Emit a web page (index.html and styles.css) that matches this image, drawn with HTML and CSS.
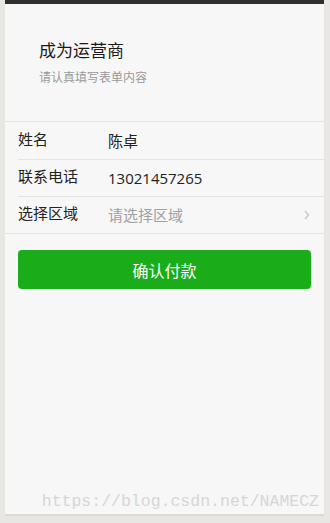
FILE: index.html
```html
<!DOCTYPE html>
<html lang="zh">
<head>
<meta charset="utf-8">
<link rel="stylesheet" href="styles.css">
</head>
<body>
<div class="panel">
  <div class="header">
    <div class="title">成为运营商</div>
    <div class="subtitle">请认真填写表单内容</div>
  </div>
  <div class="form">
    <div class="row">
      <div class="label">姓名</div>
      <div class="value">陈卓</div>
    </div>
    <div class="row">
      <div class="label">联系电话</div>
      <div class="value num">13021457265</div>
    </div>
    <div class="row last">
      <div class="label">选择区域</div>
      <div class="value placeholder">请选择区域</div>
      <svg class="chev" width="6" height="10" viewBox="0 0 6 10"><path d="M1 1 L4.5 5 L1 9" fill="none" stroke="#c8c8c8" stroke-width="1.4"/></svg>
    </div>
  </div>
  <div class="actions">
    <button class="btn">确认付款</button>
  </div>
  <div class="watermark">https://blog.csdn.net/NAMECZ</div>
</div>
</body>
</html>
```
FILE: styles.css
```css
html, body {
  margin: 0;
  padding: 0;
  background: #e8e7e3;
}
body {
  font-family: "Noto Sans CJK SC", "Noto Sans", sans-serif;
  color: #222;
  height: 523px;
  overflow: hidden;
}
.panel {
  position: relative;
  margin: 0 6px 0 5px;
  height: 510px;
  background: #f7f7f7;
  border-top: 4px solid #2f2f2f;
  box-shadow: 0 2px 1px #dcdad4;
}
.header {
  padding: 35px 0 0 34px;
  height: 82px;
  border-bottom: 1px solid #e4e4e4;
}
.title {
  font-size: 17px;
  line-height: 22px;
  color: #1a1a1a;
}
.subtitle {
  margin-top: 8px;
  font-size: 12px;
  line-height: 16px;
  color: #9a9a9a;
}
.form {
  padding-top: 1px;
  border-bottom: 1px solid #e4e4e4;
}
.row {
  display: flex;
  align-items: center;
  height: 36px;
  margin-left: 13px;
  border-bottom: 1px solid #e4e4e4;
}
.row.last {
  border-bottom: none;
}
.label {
  width: 90px;
  font-size: 15px;
  line-height: 20px;
  margin-top: -4px;
  color: #222;
}
.value {
  flex: 1;
  font-size: 15px;
  line-height: 20px;
  color: #222;
}
.value.num {
  font-family: "Open Sans", "Noto Sans", sans-serif;
  font-size: 15px;
}
.value.placeholder {
  color: #a0a0a0;
}
.chev {
  margin-right: 14px;
}
.actions {
  padding: 16px 13px 0 13px;
}
.btn {
  display: block;
  width: 100%;
  height: 39px;
  border: none;
  border-radius: 4px;
  background: #1aad19;
  color: #fff;
  font-family: "Noto Sans CJK SC", sans-serif;
  font-size: 16px;
  padding: 0;
}
.watermark {
  position: absolute;
  right: 5px;
  bottom: 3px;
  font-family: "Liberation Mono", monospace;
  font-size: 16.5px;
  color: #d6d6d6;
  letter-spacing: 0;
}
```
